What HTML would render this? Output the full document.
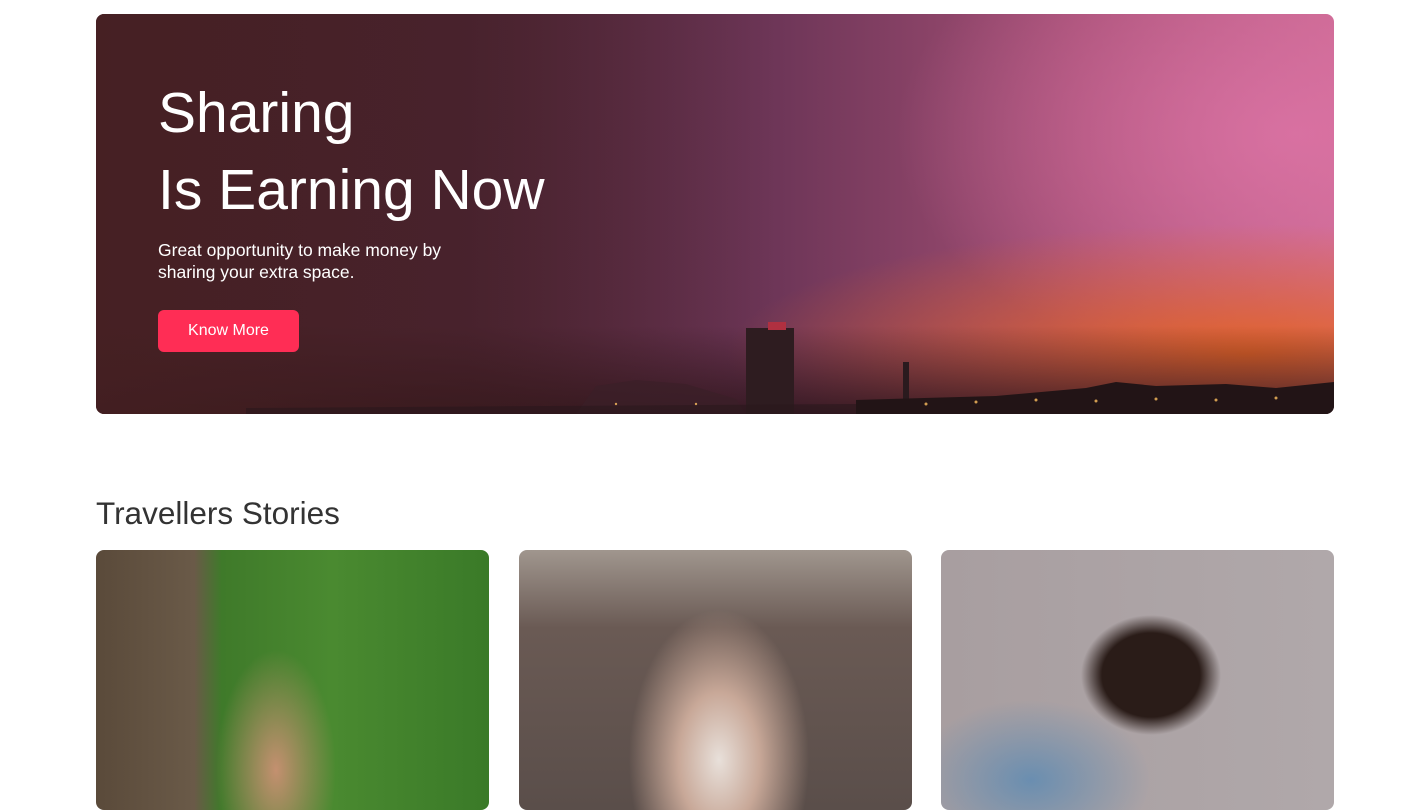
<!DOCTYPE html>
<html><head><meta charset="utf-8"><style>
*{margin:0;padding:0;box-sizing:border-box}
body{width:1428px;height:790px;overflow:hidden;background:#fff;font-family:"Liberation Sans",Arial,sans-serif;position:relative}
.hero{position:absolute;left:96px;top:14px;width:1238px;height:400px;border-radius:8px;overflow:hidden;
background:
linear-gradient(to bottom,rgba(0,0,0,0) 78%,rgba(40,18,22,.8) 100%),
radial-gradient(ellipse 520px 130px at 1150px 340px,rgba(232,100,30,.9),rgba(232,100,30,0) 100%),
radial-gradient(ellipse 400px 240px at 1200px 120px,rgba(220,115,165,.85),rgba(220,115,165,0) 100%),
linear-gradient(to right,#45212a 0%,#4a2436 30%,#6e3658 55%,#a65076 80%,#c86890 100%);}
.hero .fade{position:absolute;inset:0;background:linear-gradient(to right,rgba(70,32,34,.85) 0%,rgba(70,32,34,.4) 35%,rgba(0,0,0,0) 55%)}
.hero .city{position:absolute;left:0;right:0;bottom:0;height:110px}
h1{position:absolute;left:158px;color:#fff;font-weight:400;font-size:57px;line-height:1}
.sub{position:absolute;left:158px;top:239px;color:#fff;font-size:17.5px;line-height:22px}
.btn{position:absolute;left:158px;top:310px;width:141px;height:42px;background:#ff2d55;border-radius:6px;color:#fff;font-size:16px;text-align:center;line-height:42px}
h2{position:absolute;left:96px;top:495px;font-size:31.5px;font-weight:400;color:#333}
.card{position:absolute;top:550px;height:260px;width:393px;border-radius:8px;overflow:hidden}
</style></head><body>
<div class="hero"><div class="fade"></div>
<svg class="city" width="1238" height="110" viewBox="0 0 1238 110">
<path d="M480 110 L500 82 L540 76 L590 80 L640 95 L650 110Z" fill="#3a2028" opacity=".7"/>
<rect x="650" y="24" width="48" height="86" fill="#2e1c20"/>
<rect x="672" y="18" width="18" height="8" fill="#b03040"/>
<rect x="807" y="58" width="6" height="52" fill="#2a1a1e"/>
<path d="M760 110 L760 96 L900 92 L990 84 L1020 78 L1060 82 L1130 80 L1180 84 L1238 78 L1238 110Z" fill="#221416"/>
<path d="M150 110 L150 104 L760 100 L760 110Z" fill="#2a181c" opacity=".6"/>
<g fill="#ffc060" opacity=".8"><circle cx="830" cy="100" r="1.5"/><circle cx="880" cy="98" r="1.5"/><circle cx="940" cy="96" r="1.5"/><circle cx="1000" cy="97" r="1.5"/><circle cx="1060" cy="95" r="1.5"/><circle cx="1120" cy="96" r="1.5"/><circle cx="1180" cy="94" r="1.5"/><circle cx="600" cy="100" r="1.2"/><circle cx="520" cy="100" r="1.2"/></g>
</svg></div>
<h1 style="top:85px">Sharing</h1>
<h1 style="top:162px">Is Earning Now</h1>
<div class="sub">Great opportunity to make money by<br>sharing your extra space.</div>
<div class="btn">Know More</div>
<h2>Travellers Stories</h2>
<div class="card" style="left:96px;background:radial-gradient(ellipse 60px 120px at 180px 220px,#c49070,rgba(196,144,112,0)),linear-gradient(to right,#5a4a3a 0%,#6a5a48 25%,#3f7a2a 32%,#4a8a30 60%,#3a7a28 100%)"></div>
<div class="card" style="left:519px;background:radial-gradient(ellipse 90px 150px at 200px 210px,#e8e0da 0%,#c8a898 45%,rgba(200,168,152,0) 100%),linear-gradient(to bottom,#a0968e 0%,#6a5a54 30%,#5a4e4a 100%)"></div>
<div class="card" style="left:941px;background:radial-gradient(ellipse 70px 60px at 210px 125px,#2a1c18 0%,#2a1c18 70%,rgba(42,28,24,0) 100%),radial-gradient(ellipse 120px 80px at 90px 230px,#6a8eb0,rgba(106,142,176,0)),linear-gradient(to right,#a89ea0,#b0a8aa)"></div>
</body></html>
